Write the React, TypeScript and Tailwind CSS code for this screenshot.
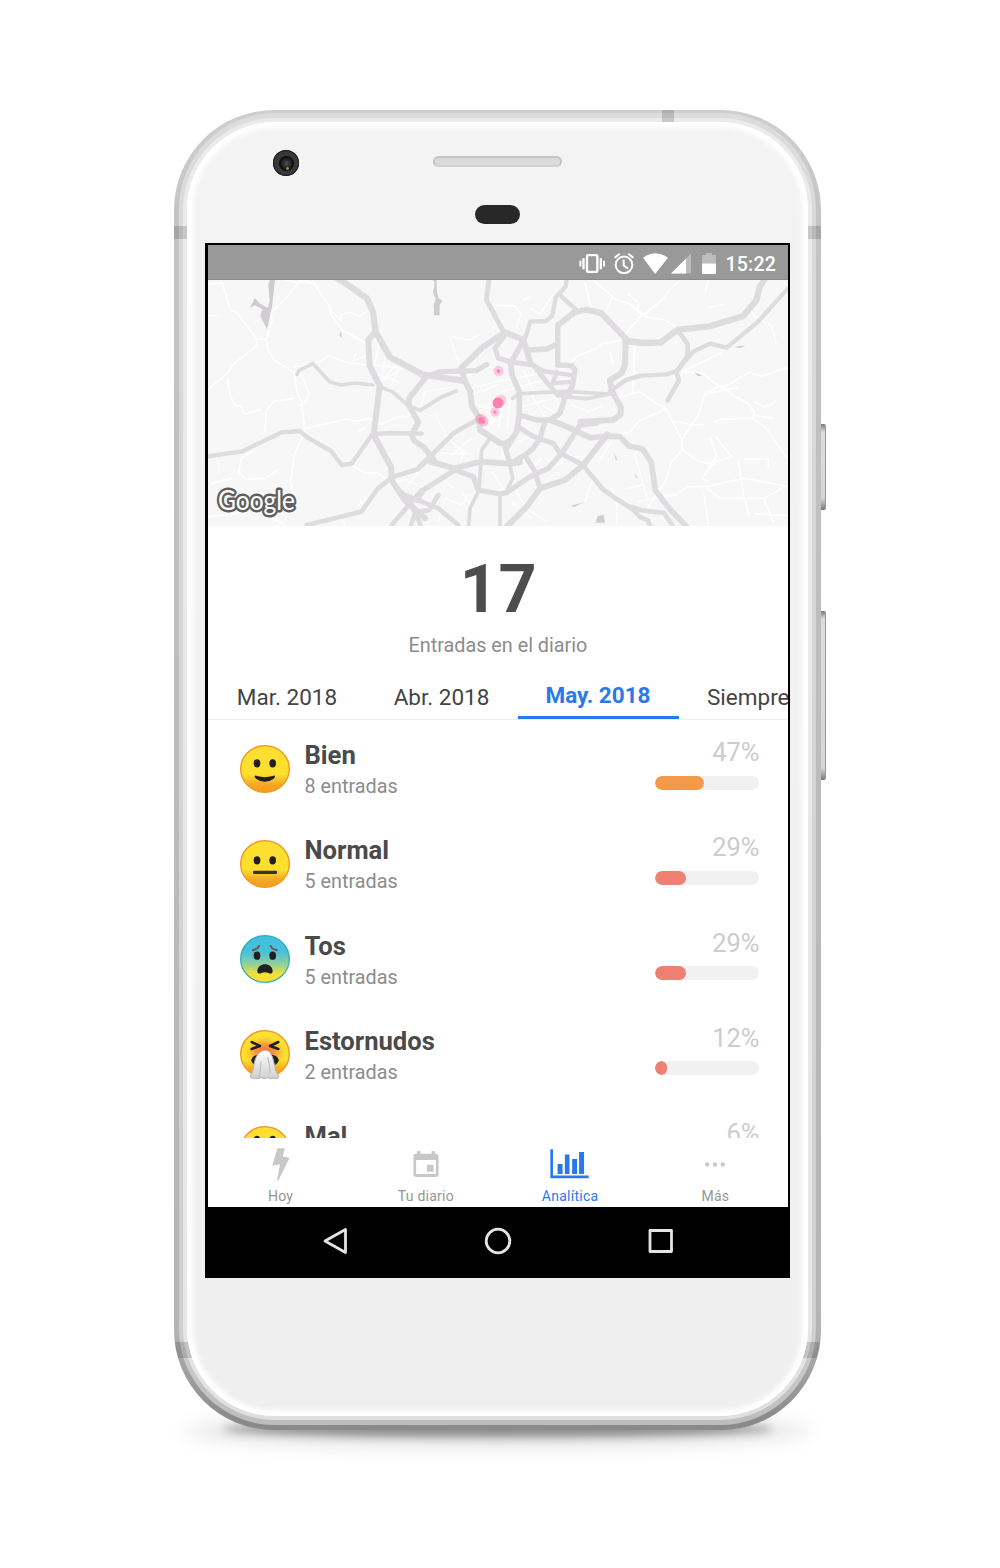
import React from "react";

type Face = "smile" | "neutral" | "cough" | "sneeze" | "sad";

const rows: { name: string; count: string; pct: string; width: number; bar: string; face: Face }[] = [
  { name: "Bien", count: "8 entradas", pct: "47%", width: 49, bar: "bg-[#f2994a]", face: "smile" },
  { name: "Normal", count: "5 entradas", pct: "29%", width: 31, bar: "bg-[#ee7f71]", face: "neutral" },
  { name: "Tos", count: "5 entradas", pct: "29%", width: 31, bar: "bg-[#ee7f71]", face: "cough" },
  { name: "Estornudos", count: "2 entradas", pct: "12%", width: 12, bar: "bg-[#ee7f71]", face: "sneeze" },
  { name: "Mal", count: "", pct: "6%", width: 6, bar: "bg-[#ee7f71]", face: "sad" },
];

const eyeHeight: Record<Face, number> = { smile: 55, neutral: 61, cough: 62, sneeze: 0, sad: 42 };

/* Faces share a 150x144 grid; the sneezing face extends a little below it. */
function Emoji({ face }: { face: Face }) {
  const sick = face === "cough";
  const id = "g-" + face;
  return (
    <svg viewBox="0 0 150 144" className="mt-[0.5px] h-[48px] w-[50px] overflow-visible">
      <defs>
        <linearGradient id={id} x1="0" y1="0" x2="0" y2="1">
          {sick ? (
            <>
              <stop offset="0" stopColor="#40c0e7" />
              <stop offset=".35" stopColor="#48c1da" />
              <stop offset=".6" stopColor="#8fcfa0" />
              <stop offset=".82" stopColor="#f2df3a" />
              <stop offset="1" stopColor="#fde030" />
            </>
          ) : (
            <>
              <stop offset="0" stopColor="#fde030" />
              <stop offset=".62" stopColor="#fddf2e" />
              <stop offset=".84" stopColor="#f5a623" />
              <stop offset="1" stopColor="#f39c1f" />
            </>
          )}
        </linearGradient>
        <radialGradient id="blush">
          <stop offset="0" stopColor="#f4673c" />
          <stop offset=".5" stopColor="#f98a43" stopOpacity=".8" />
          <stop offset="1" stopColor="#fdc02f" stopOpacity="0" />
        </radialGradient>
        <linearGradient id="tissue" x1="0" y1="0" x2="0" y2="1">
          <stop offset="0" stopColor="#fff" />
          <stop offset="1" stopColor="#cfcfcf" />
        </linearGradient>
      </defs>
      <ellipse cx="75" cy="72" rx="73" ry="70" fill={`url(#${id})`} stroke={sick ? "#2fb1ab" : "#f0961e"} strokeWidth="4" />
      {face !== "sneeze" && (
        <g fill="#231f20">
          <ellipse cx="51" cy={eyeHeight[face]} rx="10" ry="12.5" />
          <ellipse cx="98" cy={eyeHeight[face]} rx="10" ry="12.5" />
        </g>
      )}
      {face === "smile" && (
        <path d="M44 93q-1 4 4 8q26 19 53 0q5-4 4-8q-2-3-7 0q-23 7-47 0q-5-3-7 0z" fill="#231f20" />
      )}
      {face === "neutral" && <rect x="39" y="92" width="72" height="10" rx="3" fill="#333" />}
      {sick && (
        <>
          <path d="M39 45q14-2 18-12M110 45q-14-2-18-12" fill="none" stroke="#79503c" strokeWidth="6" strokeLinecap="round" />
          <path d="M52 108c0-12 12-20 23-20s23 8 23 20c0 9-8 9-12 6q-11-5-22 0c-4 3-12 3-12-6z" fill="#231f20" />
        </>
      )}
      {face === "sneeze" && (
        <>
          <ellipse cx="75" cy="67" rx="62" ry="50" fill="url(#blush)" />
          <g fill="none" stroke="#231f20" strokeWidth="7.500" strokeLinecap="round" strokeLinejoin="round">
            <path d="M35 36l25 12-25 9M115 36l-25 12 25 9" />
          </g>
          <ellipse cx="75" cy="91" rx="41" ry="20" fill="#231f20" />
          <path d="M60 67q15-13 30 0q8 10 12 32q4 27 15 42q-5 9-15 3q-10 5-19-1q-10 5-20 0q-10 6-19 1q-8 4-14-3q10-16 13-42q5-24 17-32z" fill="url(#tissue)" stroke="#b4b4b4" strokeWidth="3" />
          <path d="M63 95q-1 32-7 46M83 82q8 31 7 47" fill="none" stroke="#b8b8b8" strokeWidth="3" strokeLinecap="round" />
        </>
      )}
    </svg>
  );
}

function CityMap() {
  return (
    <svg viewBox="0 0 580 246" className="block h-[246px] w-[580px] bg-[#f7f7f7]" fill="none">
      {/* minor streets, western half */}
      <g transform="translate(-3 -5) scale(.33333)" stroke="#fff" strokeWidth="5" strokeLinejoin="round" strokeLinecap="round">
        <path d="M10 28l40-6 8 22 18 60 20 10 60 78h28l18-58-6-20 50-48 40-50 40 10 50 70 0 20 36 50 40 20 50 30" />
        <path d="M155 192v20l-75 60-10 20-60 50M184 192l4 30 20 34 60 36 8 60 14 30 10 90-30 60-14 90 10 44-50 40M268 276l60-10 45-24 50 20 60 8" />
        <path d="M68 312l8 50 12 28 20 4 12 24 46-14M180 470l4-64 24-28 60-8M290 300l22 54-12 30-18 6M305 460l120-28 30 8 36-10 40 18 50-24 30 0 15-22" />
        <path d="M100 590l10-40 30-20M20 625l60-15M100 590l24 24 56-4 40-26M10 725l80-8 50-22 100 56M440 570l40 24h40l34 30 50-10M460 690l60-40M410 730l10 20" />
        <path d="M372 100l36 38 0-20 30-6 24 12 30-20M436 180l56 32-8 30-40 16 8-20M230 12l50 12 40-12 20 30M520 210l-10 60 80 10-60 40 40-48M520 300l60 20" strokeWidth="4" />
        <path d="M540 245l-14 80M580 285l-20 45M600 640l50-60M610 620l50 20M700 740l20-70 50 20 20-30M770 650l40 60M690 600l60 40" strokeWidth="4" />
        <path d="M740 185l50 10 30-14M736 190l26 74M660 350l-10 40M660 350l90-15M690 420l30 50M720 480l60 56M740 540l60-50M710 535h90M780 530l-16 30M860 590l40 60M770 310l90-36 30 10M800 340l96-26M800 360l80-30M850 380l14 60M820 390l60 20M842 470l48-70" strokeWidth="4" />
        <path d="M34 546l8 24 0 24M10 122h30M460 470l16-10" strokeWidth="4" />
      </g>
      {/* minor streets, eastern half */}
      <g transform="translate(287 -5) scale(.33333)" stroke="#fff" strokeWidth="5" strokeLinejoin="round" strokeLinecap="round">
        <path d="M0 90l60 4 18 24-14 40M105 100l30 18 40-60M270 24l24 100M295 15l58 50-20 40M353 68l54 20 40 32 60-50 20-30 26-20M440 120l-60 70M450 125l60 10 40 26M400 58l30 24 0 34" />
        <path d="M192 290l60-50 54-20 14-14 60-10M420 210l-6 142M360 370l76-20 40 30 38 22 46 92 2 30-34 40-14 50-60 90M514 402l-80 34-30 36-60 12M562 524l48 36 50 8M560 494l50-74 20-64 46-24 40 30 40 22 22 26-4 20 40 30 62 90M680 340l-60-46-60-4 120-56M680 340l84-48 34 12 78-26M636 356l90-18" />
        <path d="M660 440l20-8 90-2M780 380l30 16 30-14M774 420l60 10M662 486l48 60-50 15-40 50 20 8M646 490l20 52-40 60M730 560l16 100 16 62M636 634l110-24 130 24M640 634l-60 2-40 24-46 8M636 640l40 30h130l64-34M806 672l30 70M780 716l100 6M750 552l70 0 0 26" />
        <path d="M430 520l-10 20 36 130M350 640l16 50 0 60M290 620l-20 60M310 560l40-60M60 640l34 60 60 40M50 680l60 50M400 640l40-10" strokeWidth="4" />
        <path d="M10 320l130-26M20 350l130-36M80 395l116-30M110 360l40 66M85 285l30 60M90 440l-30-60M140 390l50 30M230 390l50 20 40-16M540 440l60 10 30-2M626 656l14 90M630 56l10-40M640 98l46-10M770 110l10 16 50 26 14 56M346 234l8 30M85 75l20-8" strokeWidth="4" />
        <path d="M20 400l-10 60M45 380l-8 80M70 500l40-20 30 20M150 550l40 20 40-30M30 560l-10-60M100 590l40-40M240 545l60 0 20-60M430 680l90-20" strokeWidth="4" />
      </g>
      {/* water and parks */}
      <g fill="#cfcdd0">
        <g transform="translate(-3 -5) scale(.33333)">
          <path d="M190 30l4-15h16l-1 10-8 70-15 68-20-40 6-20-22-12-16 8 16-30 14 16 24 14 6-20zM680 14h15v30l5 25 12 8-8 14 0 30-17 0-1-30 6-18-8-22 4-16 0-16zM402 180l6-12 2 20z" />
        </g>
        <g transform="translate(287 -5) scale(.33333)">
          <path d="M716 216l36-5-16 8zM598 291l24 11-14 1zM228 692l38-10-28 14zM308 724l18-5 4 24h-28zM356 532l12 26-6-4zM418 594l12 18-8-6z" />
        </g>
      </g>
      {/* highways, western half */}
      <g transform="translate(-3 -5) scale(.33333)" stroke="#dedcdf" strokeWidth="14" strokeLinejoin="round" strokeLinecap="round">
        <path d="M394 8l50 32 42 30 18 42 8 58 42 76 98 52 48 8 80 12" strokeWidth="19" />
        <path d="M512 170l-22 24 4 78 30 60-18 148 52 96 2 40 40 60 60 54" strokeWidth="18" />
        <path d="M8 544l102-14 120-58 54-4 24 20 70 40 32 42 30-4 62-88 50-4 98 2" strokeWidth="13" />
        <path d="M276 298l6-12 42-20 50 54 32 10 44-6 54 6" strokeWidth="11" />
        <path d="M660 310l-48 60 0 22 28 50-20 36 8 20 30 20 34 44" strokeWidth="17" />
        <path d="M526 336l36 14 50 44 34 12 60-38 48-20" strokeWidth="11" />
        <path d="M305 750l164-40 50-70 44-34 76-24 36-36" strokeWidth="14" />
        <path d="M560 750l90-104M592 654l40 60 14 34M632 710l40-4 28-46M600 660l100 40 60 50M632 710l-14 40" strokeWidth="14" />
        <path d="M852 14l-8 60 48 90" strokeWidth="15" />
      </g>
      {/* highways, eastern half */}
      <g transform="translate(287 -5) scale(.33333)" stroke="#dedcdf" strokeWidth="14" strokeLinejoin="round" strokeLinecap="round">
        <path d="M90 190l16-50 48-2 18-16 10-54 30-34 4-30M200 65l44 40" strokeWidth="13" />
        <path d="M190 150l48-38 36-8 44 10 74 76-2 80-10 24-36 22 8 34 26 48-2 20-20 16-50 4-50 2" strokeWidth="18" />
        <path d="M345 348l50-34 44-12 76-4 30-10 50-58 50-24 50 12 92-76 92-102" strokeWidth="13" />
        <path d="M392 198l50 6 56-2 50-38 96-10 100-30 40-48 10-40 14-22" strokeWidth="19" />
        <path d="M550 168l28 40 0 34-34 50 8 24-34 60" />
        <path d="M335 484l38 0 30 30 40 8 26 40 12 84 46 60 46 46" strokeWidth="17" />
        <path d="M265 572l60 72 34 24 56 36 20 22 24 10 6 16M395 692l46 14 66 8 24 36" strokeWidth="14" />
      </g>
      {/* inner ring and its approaches */}
      <g transform="translate(202 35) scale(.33333)" stroke="#dedcdf" strokeWidth="13" strokeLinejoin="round" strokeLinecap="round">
        <path d="M155 160l8 35 18 35 4 42 20 32 5 40 32 22 28 18" strokeWidth="18" />
        <path d="M270 384q24 10 50-34l8-50v-70l-22-50-4-35 38-68" strokeWidth="17" />
        <path d="M255 372l30 18 34-30-26 42q-14-20-38-30z" fill="#dedcdf" strokeWidth="8" />
        <path d="M155 158l65-63 65-43 55 22 20 66" strokeWidth="18" />
        <path d="M45 187l45-17 108-3 32-18" strokeWidth="16" />
        <path d="M285 60l-30 40 10 30 35 10 70 10 35 45 38 45 37 2" strokeWidth="15" />
        <path d="M360 105l50-3 30-14" strokeWidth="16" />
        <path d="M443 30v120l42 2 10 13-8 50-22 30-15 50-30 20-40 0-52-15" strokeWidth="16" />
        <path d="M370 152l34 17 86 12M440 170l-12 35 62-5" />
        <path d="M308 250l20-14 132-7 140 8M465 246l65 5 70-14" strokeWidth="11" />
        <path d="M420 315l50 20 70 33 60-5" strokeWidth="17" />
        <path d="M405 320l-15 50-20 30-25 20-45 26-15-50" strokeWidth="16" />
        <path d="M328 338l42 27 60 20 20 30 70 35" strokeWidth="15" />
        <path d="M60 440l75 20 75-20 90 6 30-4" strokeWidth="17" />
        <path d="M300 450l8 40-20 42" strokeWidth="11" />
        <path d="M22 555l18-30 95-60 55 20 15 40 65 12 20-4 70-48 55-25 40-45 55-84 50-7" strokeWidth="16" />
        <path d="M592 358l-72 92-55 45-75 25-40 55-62 62" strokeWidth="18" />
        <path d="M345 422l30 48 15 50" strokeWidth="15" />
        <path d="M205 530l-25 50-5 60M240 370l-25 35-8 120M270 540v100" strokeWidth="11" />
        <path d="M205 313l-75 42-70 70-30 28" strokeWidth="14" />
      </g>
      {/* entry locations */}
      <g fill="#ff6fae">
        <circle cx="290.500" cy="91" r="5.200" opacity=".32" />
        <circle cx="290.500" cy="91" r="1.900" opacity=".75" />
        <circle cx="292.800" cy="120" r="5.500" opacity=".3" />
        <circle cx="290" cy="122.800" r="5.500" fill="#ff7fb1" />
        <circle cx="287" cy="132" r="4.800" opacity=".32" />
        <circle cx="287" cy="132" r="1.700" opacity=".75" />
        <circle cx="272.500" cy="139" r="5" opacity=".45" />
        <circle cx="275.500" cy="141.500" r="5" opacity=".38" />
        <circle cx="272.800" cy="139.500" r="2" fill="#f879ac" />
        <circle cx="275.300" cy="142" r="1.700" fill="#f879ac" />
      </g>
      <text x="10" y="230" fill="#fff" stroke="#5f5f5f" strokeWidth="5" strokeLinejoin="round" paintOrder="stroke" textLength="77" lengthAdjust="spacingAndGlyphs" className="font-['Lato'] text-[27px] font-normal">
        Google
      </text>
    </svg>
  );
}

function StatusBar() {
  return (
    <div className="flex h-[35px] items-center justify-end border-b border-[#8b8b8b] bg-[#999] pr-3">
      <svg viewBox="252 458 78 62" className="mr-[9px] mt-[2px] h-[21px] w-[26px]" fill="#fff">
        <rect x="276" y="464" width="31" height="50" rx="3" fill="none" stroke="#fff" strokeWidth="7" />
        <path d="M262 473h7v33h-7zM253 481h6v17h-6zM314 473h7v33h-7zM324 481h6v17h-6z" />
      </svg>
      <svg viewBox="357 458 60 62" className="mr-[9px] mt-[2px] h-[21px] w-[20px]" fill="none" stroke="#fff" strokeWidth="6">
        <circle cx="387" cy="493" r="25" />
        <path d="M386 477v18l13 9M359 472l15-12M415 472l-15-12" />
      </svg>
      <svg viewBox="446 458 74 62" className="mr-[3px] mt-[2px] h-[21px] w-[25px]" fill="#fff">
        <path d="M446 472Q482 445 520 472L482 520z" />
      </svg>
      <svg viewBox="528 458 60 62" className="mr-[11px] mt-[2px] h-[21px] w-[20px]" fill="#fff">
        <path d="M528 519L588 459V519z" opacity=".35" />
        <path d="M528 519L573 474V519z" />
      </svg>
      <svg viewBox="621 458 41 62" className="mr-[10px] mt-[2px] h-[21px] w-[14px]" fill="#fff">
        <path d="M621 464h12v-6h17v6h12v26h-41z" opacity=".35" />
        <path d="M621 489h41v31h-41z" />
      </svg>
      <span className="mt-[5px] w-[50px] text-[19.5px] font-medium leading-none tracking-[0.2px] text-white">15:22</span>
    </div>
  );
}

function NavItem({ label, active, children }: { label: string; active?: boolean; children: React.ReactNode }) {
  return (
    <div className={active ? "flex flex-1 flex-col items-center text-[#2979ee]" : "flex flex-1 flex-col items-center pl-px text-[#959595]"}>
      <div className="mt-2 flex h-[37px] items-center">{children}</div>
      <span className="mt-[4px] text-[14px] leading-[18px] tracking-[0.25px]">{label}</span>
    </div>
  );
}

export default function App() {
  return (
    <main className="h-[1568px] w-[1000px] overflow-hidden bg-white pl-[174px] pt-[110px] font-['Roboto',sans-serif]">
      <div className="relative h-[1320px] w-[647px]">
        {/* drop shadow and side keys */}
        <div className="absolute bottom-[-7px] left-[48px] h-[16px] w-[551px] rounded-[50%] bg-black/40 blur-[5px]" />
        <div className="absolute bottom-[-18px] left-[10px] h-[34px] w-[627px] rounded-[50%] bg-black/10 blur-[9px]" />
        <div className="absolute left-[645px] top-[314px] h-[86px] w-[7px] rounded-r-[2px] border-r border-[#999] bg-[linear-gradient(180deg,#777_0,#ddd_8px,#d6d6d6_74px,#777_86px)]" />
        <div className="absolute left-[645px] top-[501px] h-[169px] w-[7px] rounded-r-[2px] border-r border-[#999] bg-[linear-gradient(180deg,#777_0,#ddd_8px,#d6d6d6_157px,#777_169px)]" />

        <div className="relative h-full overflow-hidden rounded-[100px] bg-[linear-gradient(180deg,#cfcfcf_0,#c4c4c4_100px,#b4b4b2_1220px,#8a8a8a_1310px)] px-[5px] pb-[5px] pt-[3px]">
          <div className="h-full rounded-[96px] bg-[linear-gradient(180deg,#dcdcdc_0,#dadada_100px,#cfcfcf_1220px,#bdbdbd_1310px)] px-[4px] pb-[5px] pt-[5px]">
            <div className="h-full rounded-[92px] bg-[linear-gradient(180deg,#ebebeb_0,#e6e6e6_1220px,#dfdfdf_1300px)] px-[4px] pb-[4px] pt-[4px]">
              <div className="h-full rounded-[88px] bg-white" />
            </div>
          </div>
          <div className="absolute left-0 top-[116px] h-[13px] w-full bg-black/15" />
          <div className="absolute left-0 top-[1232px] h-[16px] w-full bg-black/15" />
          <div className="absolute left-[488px] top-0 h-[13px] w-[12px] bg-black/15" />

          {/* front glass */}
          <div className="absolute inset-x-[13px] bottom-[14px] top-[12px] flex flex-col items-center rounded-[88px] bg-linear-to-b from-[#f3f3f3] to-[#efefef] shadow-[inset_0_0_5px_6px_#fff]">
            <div className="relative h-[121px] w-full shrink-0">
              <div className="absolute left-[86px] top-[28px] flex size-[26px] items-center justify-center rounded-full bg-[#38383a] ring-1 ring-inset ring-[#1c1c1c]">
                <div className="flex size-[15px] items-end justify-center rounded-full bg-[radial-gradient(circle,#4b5256,#0b0b0c_65%)] pb-[1px] pl-[3px]">
                  <div className="size-[3px] rounded-full bg-[#8a8f3a]" />
                </div>
              </div>
              <div className="absolute left-[246px] top-[34px] h-[11px] w-[129px] rounded-full border-2 border-[#c3c3c3] border-b-[#d0d0d0] bg-[#dadada]" />
              <div className="absolute left-[288px] top-[83px] h-[19px] w-[45px] rounded-full bg-[#282828]" />
            </div>

            {/* display */}
            <div className="mr-px h-[1035px] w-[585px] shrink-0 bg-black pl-[3px] pr-[2px] pt-[2px]">
              <div className="h-[962px] w-[580px] overflow-hidden bg-white">
                <StatusBar />
                <CityMap />
                <section className="flex h-[145px] flex-col items-center">
                  <div className="mt-[31px] pl-[2px] text-[66.5px] font-bold leading-[64px] tracking-[0.5px] text-[#4d4d4d]">17</div>
                  <div className="mt-[12px] pl-px text-[19.8px] leading-[26px] text-[#8c8c8c]">Entradas en el diario</div>
                </section>

                <nav className="flex h-[49px] overflow-hidden border-b border-[#eee] text-[22.5px] leading-[52px] text-[#444]">
                  <div className="h-[49px] w-[157px] shrink-0 pl-[2px] text-center">Mar. 2018</div>
                  <div className="h-[49px] w-[153px] shrink-0 pl-px text-center">Abr. 2018</div>
                  <div className="h-[48px] w-[161px] shrink-0 border-b-[3px] border-[#2979ee] text-center font-bold leading-[49px] text-[#2979ee]">May. 2018</div>
                  <div className="h-[49px] shrink-0 pl-[28.5px]">Siempre</div>
                </nav>

                <div className="h-[418px] overflow-hidden">
                  {rows.map((r) => (
                    <div key={r.name} className="flex h-[95.3px] items-start pl-8 pr-[29px] pt-[24px]">
                      <Emoji face={r.face} />
                      <div className="ml-[15px] flex-1">
                        <div className="mt-[-4px] text-[25.6px] font-bold leading-[30px] text-[#4a4a4a]">{r.name}</div>
                        <div className="mt-[4px] text-[19.8px] leading-[26px] text-[#8c8c8c]">{r.count}</div>
                      </div>
                      <div className="flex w-[104px] flex-col">
                        <div className="mr-[-1px] mt-[-7px] text-right text-[25.5px] leading-[30px] text-[#ccc]">{r.pct}</div>
                        <div className="mt-[8.5px] h-[14px] w-full overflow-hidden rounded-full bg-[#f1f1f1]">
                          <div className={"h-full rounded-full " + r.bar} style={{ width: r.width }} />
                        </div>
                      </div>
                    </div>
                  ))}
                </div>

                <div className="flex h-[69px] bg-white">
                  <NavItem label="Hoy">
                    <svg viewBox="140 387 54 98" className="h-[33px] w-[18px]" fill="#c8c8c8">
                      <path d="M156 387h23l-7 25 21 4-34 68-4-1 9-47-23 4z" />
                    </svg>
                  </NavItem>
                  <NavItem label="Tu diario">
                    <svg viewBox="563 392 78 79" className="mb-[2px] h-[26px] w-[26px]" fill="#c8c8c8">
                      <path fillRule="evenodd" d="M575 392h10v8h34v-8h10v8h3q8 0 8 8v55q0 8-8 8h-60q-8 0-8-8v-55q0-8 8-8h3zM572 419v43h60v-43z" />
                      <rect x="605" y="434" width="20" height="21" />
                    </svg>
                  </NavItem>
                  <NavItem label="Analítica" active>
                    <svg viewBox="121 387 118 90" className="mb-px mr-px h-[30px] w-[39px]" fill="#2979ee">
                      <path d="M122 387h8v80h108v8H122zM144 432h15v30h-15zM166 403h14v59h-14zM188 417h15v45h-15zM209 396h15v66h-15z" />
                    </svg>
                  </NavItem>
                  <NavItem label="Más">
                    <svg viewBox="583 424 66 16" className="h-[5px] w-[22px]" fill="#c8c8c8">
                      <circle cx="591" cy="432" r="7" />
                      <circle cx="616" cy="432" r="7" />
                      <circle cx="641" cy="432" r="7" />
                    </svg>
                  </NavItem>
                </div>
              </div>

              <div className="flex h-[70px] items-center">
                <svg viewBox="0 0 580 70" className="h-[70px] w-[580px]" fill="none" stroke="#e4e4e4" strokeWidth="2.800" strokeLinejoin="round">
                  <path d="M137.500 22.500v23L117 34z" />
                  <circle cx="290" cy="34" r="11.800" />
                  <rect x="442" y="23.500" width="21.500" height="21" />
                </svg>
              </div>
            </div>
          </div>
        </div>
      </div>
    </main>
  );
}
